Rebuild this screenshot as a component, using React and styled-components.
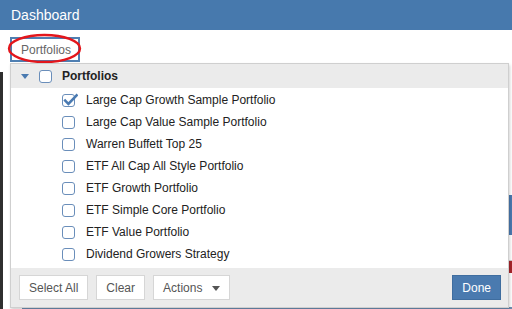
import React from "react"
import styled, { createGlobalStyle } from "styled-components"

const GlobalStyle = createGlobalStyle`
  html, body {
    margin: 0;
    padding: 0;
    background: #fff;
  }
  body {
    font-family: "Liberation Sans", Arial, sans-serif;
  }
`

const portfolios = [
  { name: "Large Cap Growth Sample Portfolio", checked: true },
  { name: "Large Cap Value Sample Portfolio" },
  { name: "Warren Buffett Top 25" },
  { name: "ETF All Cap All Style Portfolio" },
  { name: "ETF Growth Portfolio" },
  { name: "ETF Simple Core Portfolio" },
  { name: "ETF Value Portfolio" },
  { name: "Dividend Growers Strategy" },
]

export default function App() {
  return (
    <>
      <GlobalStyle />
      <Page>
        <Header>Dashboard</Header>
        <Toolbar>
          <TriggerWrap>
            <Trigger>Portfolios</Trigger>
            <Circled viewBox="0 0 76 32" width="76" height="32">
              <ellipse cx="37.5" cy="15.5" rx="35.5" ry="13.5" fill="none" stroke="#e3161c" strokeWidth="2.4" />
            </Circled>
          </TriggerWrap>
        </Toolbar>

        <Content>
          <BlueCard />
          <RedStrip />
          <TableHead />
        </Content>

        <Dropdown>
          <GroupHeader>
            <Caret />
            <Checkbox />
            <GroupTitle>Portfolios</GroupTitle>
          </GroupHeader>
          <List>
            {portfolios.map(p => (
              <Item key={p.name}>
                <Checkbox checked={p.checked} />
                <ItemLabel>{p.name}</ItemLabel>
              </Item>
            ))}
          </List>
          <Footer>
            <Button>Select All</Button>
            <Button>Clear</Button>
            <Button>
              Actions <SmallCaret />
            </Button>
            <Spacer />
            <Button primary>Done</Button>
          </Footer>
        </Dropdown>
      </Page>
    </>
  )
}

function Checkbox({ checked }) {
  return (
    <Box>
      {checked && (
        <Tick viewBox="0 0 16 16" width="16" height="16">
          <path d="M3.2 7.6 L6.4 10.8 L14.6 2.4" fill="none" stroke="#4a7ab1" strokeWidth="2.6" strokeLinecap="square" />
        </Tick>
      )}
    </Box>
  )
}

const Page = styled.div`
  position: relative;
  width: 512px;
  height: 309px;
  overflow: hidden;
  display: flex;
  flex-direction: column;
`

const Header = styled.div`
  height: 30px;
  line-height: 30px;
  padding-left: 11px;
  background: #4779ad;
  color: #fff;
  font-size: 14px;
  flex-shrink: 0;
`

const Toolbar = styled.div`
  height: 32px;
  padding: 7px 0 0 10px;
  box-sizing: border-box;
  flex-shrink: 0;
`

const TriggerWrap = styled.div`
  position: relative;
  width: 70px;
`

const Trigger = styled.button`
  width: 70px;
  height: 25px;
  padding: 0 0 0 9px;
  border: 2px solid #4f7fb2;
  background: #fff;
  color: #666;
  font-family: "Liberation Sans", Arial, sans-serif;
  font-size: 12px;
  text-align: left;
  cursor: pointer;
`

const Circled = styled.svg`
  position: absolute;
  left: -3px;
  top: -4px;
  pointer-events: none;
`

const Content = styled.div`
  flex: 1;
  display: flex;
  flex-direction: column;
  margin-top: 10px;
  border-left: 3px solid #2e2e2e;
`

const BlueCard = styled.div`
  align-self: flex-end;
  width: 60px;
  height: 40px;
  margin-top: 123px;
  background: #4a7ab0;
`

const RedStrip = styled.div`
  align-self: flex-end;
  width: 60px;
  height: 12px;
  margin-top: 25px;
  background: #a8262b;
  border-top: 1px solid #ccc;
`

const TableHead = styled.div`
  height: 4px;
  margin: 34px 0 0 19px;
  background: #6f8fb3;
`

const Dropdown = styled.div`
  position: absolute;
  top: 63px;
  left: 10px;
  width: 499px;
  height: 245px;
  box-sizing: border-box;
  border: 1px solid #cfcfcf;
  background: #fff;
  box-shadow: 1px 2px 3px rgba(0, 0, 0, 0.18);
  display: flex;
  flex-direction: column;
`

const GroupHeader = styled.div`
  height: 24px;
  display: flex;
  align-items: center;
  padding-left: 10px;
  gap: 10px;
  background: #ebebeb;
  flex-shrink: 0;
`

const Caret = styled.span`
  width: 0;
  height: 0;
  border-left: 4.5px solid transparent;
  border-right: 4.5px solid transparent;
  border-top: 5px solid #4a7ab0;
  margin-top: 1px;
`

const GroupTitle = styled.span`
  font-size: 12px;
  font-weight: bold;
  color: #222;
`

const List = styled.div`
  flex: 1;
  padding: 1px 0 3px;
`

const Item = styled.div`
  height: 22px;
  display: flex;
  align-items: center;
  gap: 11px;
  padding-left: 51px;
`

const ItemLabel = styled.span`
  font-size: 12px;
  color: #222;
`

const Box = styled.span`
  position: relative;
  width: 13px;
  height: 13px;
  box-sizing: border-box;
  border: 1px solid #6a8eba;
  border-radius: 3px;
  background: #fff;
  flex-shrink: 0;
`

const Tick = styled.svg`
  position: absolute;
  left: -1px;
  top: -2px;
`

const Footer = styled.div`
  height: 39px;
  box-sizing: border-box;
  display: flex;
  align-items: center;
  gap: 8px;
  padding: 0 7px 0 8px;
  background: #ebebeb;
  flex-shrink: 0;
`

const Spacer = styled.div`
  flex: 1;
`

const Button = styled.button`
  height: 25px;
  padding: 0 9px;
  display: flex;
  align-items: center;
  gap: 10px;
  border: 1px solid ${p => (p.primary ? "#3f6d9f" : "#d6d6d6")};
  background: ${p => (p.primary ? "#4a7aaf" : "#fff")};
  color: ${p => (p.primary ? "#fff" : "#555")};
  font-family: "Liberation Sans", Arial, sans-serif;
  font-size: 12px;
  cursor: pointer;
`

const SmallCaret = styled.span`
  width: 0;
  height: 0;
  border-left: 4.5px solid transparent;
  border-right: 4.5px solid transparent;
  border-top: 5px solid #555;
  margin-top: 1px;
`
